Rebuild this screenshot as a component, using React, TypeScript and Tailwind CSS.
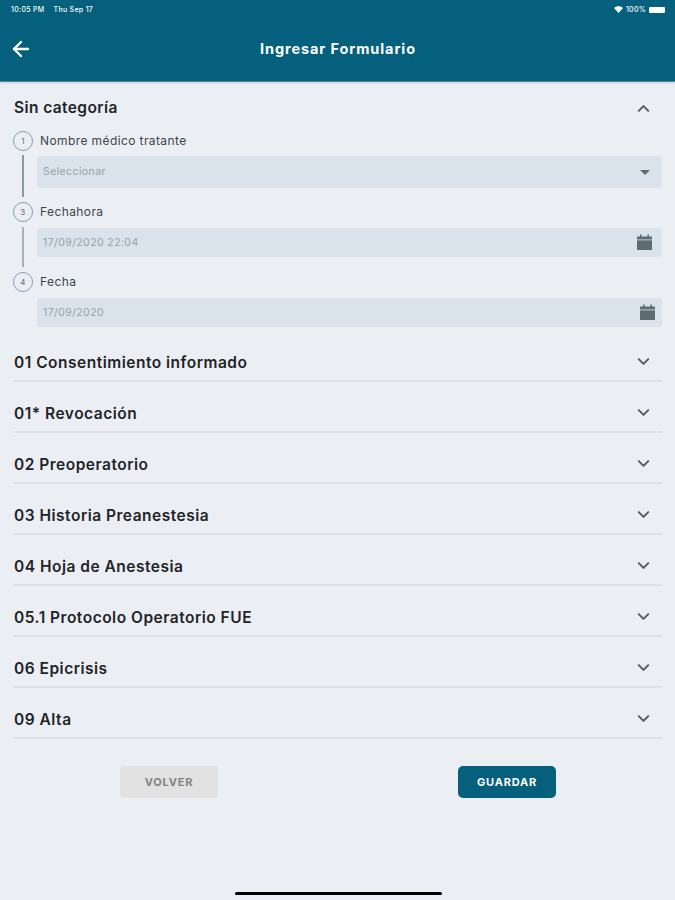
import { ArrowLeft, ChevronDown, ChevronUp } from "lucide-react";

const sections = [
  "01 Consentimiento informado",
  "01* Revocación",
  "02 Preoperatorio",
  "03 Historia Preanestesia",
  "04 Hoja de Anestesia",
  "05.1 Protocolo Operatorio FUE",
  "06 Epicrisis",
  "09 Alta",
];

function Calendar({ className }: { className: string }) {
  return (
    <svg viewBox="0 0 17 17" className={className} fill="#5f6b73">
      <rect x="4" y="0.5" width="1.6" height="3" />
      <rect x="11.4" y="0.5" width="1.6" height="3" />
      <path d="M1 2.5h15v3H1z" />
      <path d="M1 6.3h15V16H1z" />
    </svg>
  );
}

function Step({ n }: { n: number }) {
  return (
    <div className="w-[20px] h-[20px] rounded-full border border-[#7f9fae] flex items-center justify-center text-[8px] text-[#5f6b73] shrink-0">
      {n}
    </div>
  );
}

export default function App() {
  return (
    <div className="w-[675px] h-[900px] overflow-hidden flex flex-col bg-[#ebeff4] font-['Inter',sans-serif]">
      <header className="h-[82px] shrink-0 bg-[#04607c] border-b border-[#4d8a9e] shadow-[0_1px_2px_rgba(0,0,0,0.15)] text-white flex flex-col">
        <div className="h-[15px] px-[10px] flex items-end justify-between text-[7px] font-medium tracking-[0.3px]">
          <div className="flex gap-[9px] ml-px">
            <span>10:05 PM</span>
            <span>Thu Sep 17</span>
          </div>
          <div className="flex items-center gap-[3px]">
            <svg viewBox="0 0 12 9" className="w-[9px] h-[7px]" fill="white">
              <path d="M6 9 0 2.6C3.4-.6 8.6-.6 12 2.6z" />
            </svg>
            <span>100%</span>
            <div className="w-[16px] h-[6px] rounded-[1px] bg-white" />
          </div>
        </div>
        <div className="relative flex-1 flex items-center justify-center pt-px">
          <ArrowLeft className="absolute left-[9px] top-[22px] w-[24px] h-[24px]" strokeWidth={2.4} />
          <h1 className="text-[14.5px] font-bold tracking-[0.9px] ml-px">Ingresar Formulario</h1>
        </div>
      </header>

      <main className="px-[13px] flex flex-col">
        <div className="h-[50px] flex items-center justify-between pt-[2px] pl-px">
          <span className="text-[15.5px] font-semibold tracking-[0.4px] text-[#1f2427]">Sin categoría</span>
          <ChevronUp className="w-[19px] h-[19px] mr-[9px] text-[#4f5a60]" strokeWidth={2.4} />
        </div>

        <div className="flex flex-col text-[12px] tracking-[0.4px] text-[#3d4449] mt-[-1px]">
          <div className="flex items-center h-[20px] gap-[7px]">
            <Step n={1} />
            <span>Nombre médico tratante</span>
          </div>
          <div className="flex h-[51px]">
            <div className="w-[2px] bg-[#8d9aa1] ml-[9px] mt-[4px] mb-[5px]" />
            <div className="ml-[13px] mt-[5px] w-[625px] h-[32px] rounded-[3px] bg-[#dae3ec] flex items-center justify-between pl-[6px] pr-[12px] text-[10.5px] text-[#98a1a8]">
              <span>Seleccionar</span>
              <div className="w-0 h-0 border-x-[5px] border-x-transparent border-t-[5px] border-t-[#5f6b73]" />
            </div>
          </div>

          <div className="flex items-center h-[20px] gap-[7px]">
            <Step n={3} />
            <span>Fechahora</span>
          </div>
          <div className="flex h-[50px]">
            <div className="w-[2px] bg-[#a6b1b8] ml-[9px] mt-[5px] mb-[5px]" />
            <div className="ml-[13px] mt-[6px] w-[625px] h-[29px] rounded-[3px] bg-[#dae3ec] flex items-center justify-between pl-[6px] pr-[9px] text-[10.5px] text-[#98a1a8]">
              <span>17/09/2020 22:04</span>
              <Calendar className="w-[17px] h-[17px]" />
            </div>
          </div>

          <div className="flex items-center h-[20px] gap-[7px]">
            <Step n={4} />
            <span>Fecha</span>
          </div>
          <div className="ml-[24px] mt-[6px] w-[625px] h-[29px] rounded-[3px] bg-[#dae3ec] flex items-center justify-between pl-[6px] pr-[6px] text-[10.5px] text-[#98a1a8]">
            <span>17/09/2020</span>
            <Calendar className="w-[17px] h-[17px]" />
          </div>
        </div>

        <div className="mt-[4px] flex flex-col">
          {sections.map((s) => (
            <div key={s} className="h-[51px] border-b-2 border-[#dde1e5] flex items-center justify-between pl-px pt-[15px]">
              <span className="text-[15.5px] font-semibold tracking-[0.5px] text-[#1f2427]">{s}</span>
              <ChevronDown className="w-[19px] h-[19px] mr-[9px] mb-[4px] text-[#4f5a60]" strokeWidth={2.4} />
            </div>
          ))}
        </div>

        <div className="mt-[27px] pl-[107px] pr-[106px] flex justify-between">
          <button className="w-[98px] h-[32px] rounded-[4px] bg-[#e2e2e2] text-[11px] font-bold tracking-[0.8px] text-[#828282]">
            VOLVER
          </button>
          <button className="w-[98px] h-[32px] rounded-[5px] bg-[#04607c] text-[11px] font-bold tracking-[0.8px] text-white">
            GUARDAR
          </button>
        </div>
      </main>

      <div className="mt-auto mb-[5px] ml-[235px] w-[207px] h-[3px] rounded-full bg-black" />
    </div>
  );
}
